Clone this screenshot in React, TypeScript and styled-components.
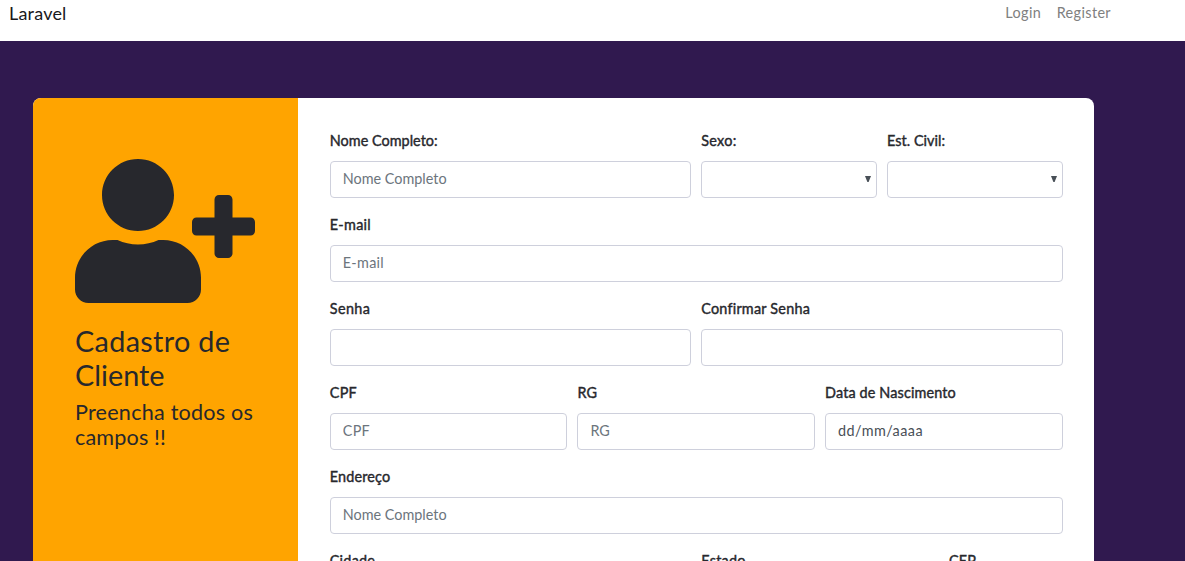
import React from "react";
import styled, { createGlobalStyle } from "styled-components";
import { FaUserPlus } from "react-icons/fa";

const GlobalStyle = createGlobalStyle`
  *, *::before, *::after { box-sizing: border-box; }
  body {
    margin: 0;
    height: 100vh;
    overflow: hidden;
    background: #30194f;
    color: #27282d;
    font-family: Lato, "Open Sans", sans-serif;
    font-size: 14.4px;
    line-height: 1.6;
  }
`;

const Page = styled.div`
  display: flex;
  flex-direction: column;
  height: 100vh;
  overflow: hidden;
`;

const Navbar = styled.nav`
  display: flex;
  flex: 0 0 41px;
  justify-content: space-between;
  padding: 0 74px 0 9px;
  background: #fff;
`;

const Brand = styled.a`
  color: #18181b;
  font-size: 18px;
  line-height: 26px;
  letter-spacing: 0.2px;
`;

const NavLinks = styled.div`
  display: flex;
  gap: 15.5px;
`;

const NavLink = styled.a`
  color: #808080;
  line-height: 26px;
  letter-spacing: 0.38px;
`;

const Card = styled.main`
  display: flex;
  flex: 1;
  min-height: 0;
  width: 1061px;
  margin: 57px 0 0 33px;
  border-radius: 8px 8px 0 0;
  overflow: hidden;
  background: #fff;
`;

const Side = styled.aside`
  flex: 0 0 265px;
  padding: 61px 42px 0;
  background: #ffa400;
`;

const UserIcon = styled(FaUserPlus)`
  display: block;
  width: 180px;
  height: 144px;
  margin-bottom: 21px;
`;

const Line = styled.span<{ $ls: number }>`
  display: block;
  white-space: nowrap;
  letter-spacing: ${(p) => p.$ls}px;
`;

const Title = styled.h2`
  margin: 0 0 8px;
  font-size: 28.8px;
  font-weight: 400;
  line-height: 34px;
`;

const Subtitle = styled.h4`
  margin: 0;
  font-size: 21.6px;
  font-weight: 400;
  line-height: 25px;
`;

const Form = styled.form`
  flex: 1;
  padding: 32px 31.25px 0 31.75px;
`;

const Row = styled.div`
  display: flex;
  margin: 0 -5px;
`;

const Group = styled.div<{ $cols: number }>`
  flex: 0 0 ${(p) => (p.$cols / 12) * 100}%;
  padding: 0 5px;
  margin-bottom: 16px;
`;

const Label = styled.label<{ $ls?: number }>`
  display: block;
  margin-bottom: 10px;
  line-height: 21.04px;
  white-space: nowrap;
  -webkit-text-stroke: 0.4px currentColor;
  letter-spacing: ${(p) => p.$ls ?? 0}px;
`;

const Input = styled.input<{ $ls?: number; $dark?: boolean }>`
  display: block;
  width: 100%;
  height: 37.04px;
  padding: 5px 12px 7px;
  border: 1px solid #ced0dc;
  border-radius: 4px;
  background: #fff;
  font: inherit;
  letter-spacing: ${(p) => p.$ls ?? 0}px;
  outline: none;
  &::placeholder {
    color: ${(p) => (p.$dark ? "#495057" : "#6c757d")};
    opacity: 1;
  }
`;

const Select = styled.div`
  display: flex;
  align-items: center;
  justify-content: flex-end;
  height: 37.04px;
  padding: 0 5px 2px 0;
  border: 1px solid #ced0dc;
  border-radius: 4px;
`;

const Arrow = () => (
  <svg width="6" height="6" viewBox="0 0 6 6" fill="#495057">
    <path d="M0 0h6L3.6 6H2.4Z" />
  </svg>
);

type Field = {
  label: string;
  cols: number;
  ls?: number;
  hint?: string;
  hintLs?: number;
  kind?: "select" | "date";
};

const rows: Field[][] = [
  [
    { label: "Nome Completo:", cols: 6, ls: 0.04, hint: "Nome Completo" },
    { label: "Sexo:", cols: 3, ls: 0.3, kind: "select" },
    { label: "Est. Civil:", cols: 3, ls: 0.05, kind: "select" },
  ],
  [{ label: "E-mail", cols: 12, ls: 0.3, hint: "E-mail", hintLs: 0.3 }],
  [
    { label: "Senha", cols: 6, ls: 0.4 },
    { label: "Confirmar Senha", cols: 6, ls: 0.22 },
  ],
  [
    { label: "CPF", cols: 4, ls: 0.3, hint: "CPF", hintLs: 0.3 },
    { label: "RG", cols: 4, ls: 0.2, hint: "RG" },
    { label: "Data de Nascimento", cols: 4, ls: 0.14, hint: "dd/mm/aaaa", hintLs: 0.45, kind: "date" },
  ],
  [{ label: "Endereço", cols: 12, ls: 0.15, hint: "Nome Completo" }],
  [
    { label: "Cidade", cols: 6, ls: 0.25 },
    { label: "Estado", cols: 4, ls: 0.25 },
    { label: "CEP", cols: 2, ls: 0.2 },
  ],
];

export default function App() {
  return (
    <>
      <GlobalStyle />
      <Page>
        <Navbar>
          <Brand>Laravel</Brand>
          <NavLinks>
            <NavLink>Login</NavLink>
            <NavLink>Register</NavLink>
          </NavLinks>
        </Navbar>
        <Card>
          <Side>
            <UserIcon />
            <Title>
              <Line $ls={0.33}>Cadastro de</Line>
              <Line $ls={0}>Cliente</Line>
            </Title>
            <Subtitle>
              <Line $ls={0.22}>Preencha todos os</Line>
              <Line $ls={0.15}>campos !!</Line>
            </Subtitle>
          </Side>
          <Form>
            {rows.map((row, i) => (
              <Row key={i}>
                {row.map((f) => (
                  <Group key={f.label} $cols={f.cols}>
                    <Label $ls={f.ls}>{f.label}</Label>
                    {f.kind === "select" ? (
                      <Select>
                        <Arrow />
                      </Select>
                    ) : (
                      <Input placeholder={f.hint} $ls={f.hintLs} $dark={f.kind === "date"} />
                    )}
                  </Group>
                ))}
              </Row>
            ))}
          </Form>
        </Card>
      </Page>
    </>
  );
}
